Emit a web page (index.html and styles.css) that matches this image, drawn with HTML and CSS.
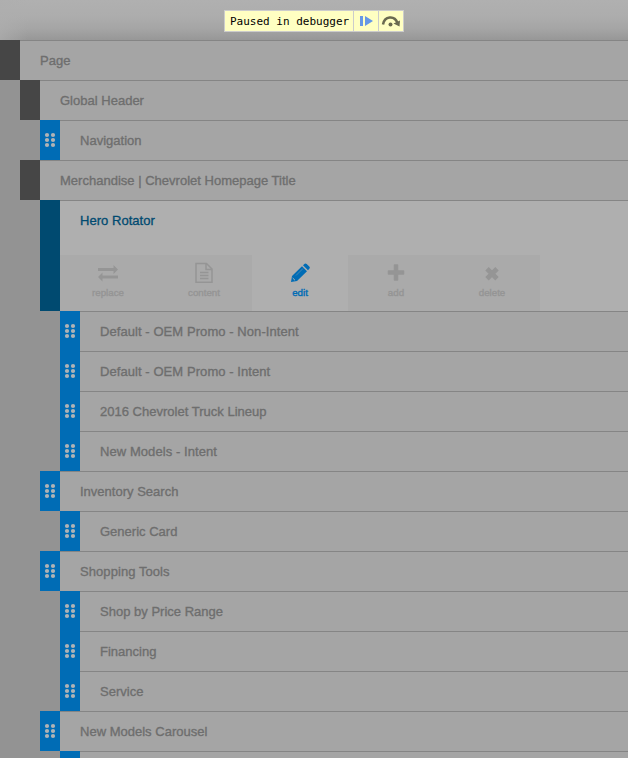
FILE: index.html
```html
<!DOCTYPE html>
<html lang="en">
<head>
<meta charset="utf-8">
<title>Page structure</title>
<link rel="stylesheet" href="styles.css">
</head>
<body>
<svg class="defs" width="0" height="0" aria-hidden="true">
  <symbol id="grip" viewBox="0 0 12 16"><g fill="#b0b3b5"><circle cx="3" cy="3" r="2.100"/><circle cx="9" cy="3" r="2.100"/><circle cx="3" cy="8" r="2.100"/><circle cx="9" cy="8" r="2.100"/><circle cx="3" cy="13" r="2.100"/><circle cx="9" cy="13" r="2.100"/></g></symbol>
</svg>
<header class="top"></header>
<main class="tree">
  <div class="row d0"><span class="handle dark"></span><span class="label">Page</span></div>
  <div class="row d1"><span class="handle dark"></span><span class="label">Global Header</span></div>
  <div class="row d2"><span class="handle"><svg class="grip"><use href="#grip"/></svg></span><span class="label">Navigation</span></div>
  <div class="row d1"><span class="handle dark"></span><span class="label">Merchandise | Chevrolet Homepage Title</span></div>
  <div class="row d2 active"><span class="handle navy"></span>
    <div class="panel">
      <span class="title">Hero Rotator</span>
      <div class="tools">
        <div class="tool"><svg viewBox="0 0 22 22"><path d="M1 6h15.500V3L21 7.500 16.500 12V9H1zM21 13.500H5.500V10.500L1 15l4.500 4.500V16.500H21z"/></svg><span>replace</span></div>
        <div class="tool"><svg viewBox="0 0 22 22"><path d="M3 1.500h10.500l5.500 5.500v13.200H3zM13 1.500v6h6M7 10.500h8.500M7 13.500h8.500M7 16.500h8.500" fill="none" stroke="currentColor" stroke-width="1.500"/></svg><span>content</span></div>
        <div class="tool on"><svg viewBox="0 0 22 22"><path d="M2 20l1-6L13 4.200l5 5L8 19zM14 3.200l1.700-1.500q1-.7 2 .2L20.500 4.700q.8 1 0 1.800L19 8.200z"/><path d="M7 13.500l7-7" stroke="#afafaf" stroke-width=".4"/><path d="M3.700 16l2.300 2.300" stroke="#afafaf" stroke-width="1"/></svg><span>edit</span></div>
        <div class="tool"><svg viewBox="0 0 22 22"><path d="M9.500 3h3v6h6v3h-6v6h-3v-6h-6V9h6z" stroke="currentColor" stroke-width="1.500" stroke-linejoin="round"/></svg><span>add</span></div>
        <div class="tool"><svg viewBox="0 0 22 22"><path d="M6 6.700l10 10M16 6.700l-10 10" stroke="currentColor" stroke-width="4.800"/></svg><span>delete</span></div>
      </div>
    </div>
  </div>
  <div class="row d3"><span class="handle"><svg class="grip"><use href="#grip"/></svg></span><span class="label spaced">Default - OEM Promo - Non-Intent</span></div>
  <div class="row d3"><span class="handle"><svg class="grip"><use href="#grip"/></svg></span><span class="label spaced">Default - OEM Promo - Intent</span></div>
  <div class="row d3"><span class="handle"><svg class="grip"><use href="#grip"/></svg></span><span class="label">2016 Chevrolet Truck Lineup</span></div>
  <div class="row d3"><span class="handle"><svg class="grip"><use href="#grip"/></svg></span><span class="label spaced">New Models - Intent</span></div>
  <div class="row d2"><span class="handle"><svg class="grip"><use href="#grip"/></svg></span><span class="label">Inventory Search</span></div>
  <div class="row d3"><span class="handle"><svg class="grip"><use href="#grip"/></svg></span><span class="label">Generic Card</span></div>
  <div class="row d2"><span class="handle"><svg class="grip"><use href="#grip"/></svg></span><span class="label spaced">Shopping Tools</span></div>
  <div class="row d3"><span class="handle"><svg class="grip"><use href="#grip"/></svg></span><span class="label">Shop by Price Range</span></div>
  <div class="row d3"><span class="handle"><svg class="grip"><use href="#grip"/></svg></span><span class="label">Financing</span></div>
  <div class="row d3"><span class="handle"><svg class="grip"><use href="#grip"/></svg></span><span class="label">Service</span></div>
  <div class="row d2"><span class="handle"><svg class="grip"><use href="#grip"/></svg></span><span class="label">New Models Carousel</span></div>
  <div class="row d3"><span class="handle"></span><span class="label"></span></div>
</main>
<div class="debugger">
  <span class="message">Paused in debugger</span>
  <span class="btn"><svg width="24" height="20" viewBox="0 0 24 20"><path d="M6 5h3v10H6zM11 5l8 5-8 5z" fill="#6698e6"/></svg></span>
  <span class="btn"><svg width="24" height="20" viewBox="0 0 24 20"><path d="M4 13.500C5.500 5 15.500 4 18.500 12" fill="none" stroke="#6a6a50" stroke-width="2.500"/><path d="M14.500 12.500l6.500-3-.5 6z" fill="#6a6a50"/><circle cx="11.500" cy="13.500" r="2" fill="#6a6a50"/></svg></span>
</div>
</body>
</html>
```

FILE: styles.css
```css
* { box-sizing: border-box; }
body { margin: 0; height: 758px; overflow: hidden; background: #939393; font-family: "Liberation Sans", Arial, sans-serif; position: relative; }
.defs { display: block; }
.top { height: 40px; overflow: hidden; background: linear-gradient(90deg, rgba(174,174,174,.7), rgba(174,174,174,0) 28px), linear-gradient(#b0b0b0 0, #adadad 40%, #a5a5a5 72%, #979797 100%); }
.row { display: flex; height: 40px; }
.d1 { padding-left: 20px; }
.d2 { padding-left: 40px; }
.d3 { padding-left: 60px; }
.handle { flex: 0 0 20px; background: #006cb5; display: flex; align-items: center; justify-content: center; }
.dark { background: #464646; }
.navy { background: #004a70; }
.grip { width: 12px; height: 16px; }
.label { flex: 1; padding-left: 20px; border-top: 1px solid #858585; background: #a5a5a5; color: #6e6e6e; font-size: 13px; line-height: 39px; letter-spacing: .01px; -webkit-text-stroke: .35px; white-space: nowrap; }
.spaced { letter-spacing: .07px; }
.row.active { height: 111px; }
.panel { flex: 1; display: flex; flex-direction: column; justify-content: space-between; background: #afafaf; border-top: 1px solid #858585; }
.title { padding-left: 20px; line-height: 39px; font-size: 13px; letter-spacing: .04px; color: #004a70; -webkit-text-stroke: .3px; }
.tools { display: flex; height: 56px; }
.tool { width: 96px; height: 56px; padding-top: 7px; background: #aaa; color: #959595; display: flex; flex-direction: column; align-items: center; font-size: 9.750px; line-height: 12px; -webkit-text-stroke: .4px; }
.tool svg { width: 22px; height: 22px; fill: currentColor; margin-bottom: 3px; }
.tool.on { background: #afafaf; color: #006cb5; }
.debugger { position: absolute; left: 224px; top: 10px; height: 22px; display: flex; background: #ffffc2; border: 1px solid #ccc; }
.message { width: 128px; padding-left: 5px; font: 11px/21px "DejaVu Sans Mono", monospace; color: #000; white-space: nowrap; }
.btn { width: 25px; border-left: 1px solid #ccc; }
.btn svg { display: block; }
```
